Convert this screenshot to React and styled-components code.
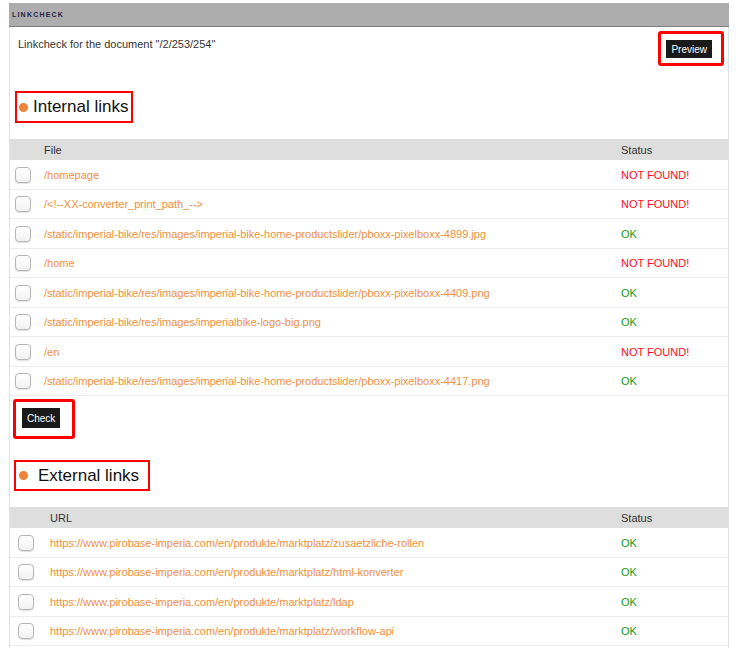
import styled, { createGlobalStyle } from "styled-components";

const internalLinks = [
  { path: "/homepage", ok: false },
  { path: "/<!--XX-converter_print_path_-->", ok: false },
  { path: "/static/imperial-bike/res/images/imperial-bike-home-productslider/pboxx-pixelboxx-4899.jpg", ok: true },
  { path: "/home", ok: false },
  { path: "/static/imperial-bike/res/images/imperial-bike-home-productslider/pboxx-pixelboxx-4409.png", ok: true },
  { path: "/static/imperial-bike/res/images/imperialbike-logo-big.png", ok: true },
  { path: "/en", ok: false },
  { path: "/static/imperial-bike/res/images/imperial-bike-home-productslider/pboxx-pixelboxx-4417.png", ok: true },
];

const externalLinks = [
  { path: "https://www.pirobase-imperia.com/en/produkte/marktplatz/zusaetzliche-rollen", ok: true },
  { path: "https://www.pirobase-imperia.com/en/produkte/marktplatz/html-konverter", ok: true },
  { path: "https://www.pirobase-imperia.com/en/produkte/marktplatz/ldap", ok: true },
  { path: "https://www.pirobase-imperia.com/en/produkte/marktplatz/workflow-api", ok: true },
];

function LinkTable({ label, links, checkCol, checkPad }) {
  return (
    <Table>
      <HeadRow $checkCol={checkCol}>
        <span />
        <span>{label}</span>
        <span>Status</span>
      </HeadRow>
      {links.map((link, i) => (
        <Row key={i} $checkCol={checkCol}>
          <CheckCell $pad={checkPad}>
            <Checkbox />
          </CheckCell>
          <LinkText>{link.path}</LinkText>
          <Status $ok={link.ok}>{link.ok ? "OK" : "NOT FOUND!"}</Status>
        </Row>
      ))}
    </Table>
  );
}

export default function App() {
  return (
    <>
      <GlobalStyle />
      <Page>
        <Panel>
          <TitleBar>
            <TitleText>LINKCHECK</TitleText>
          </TitleBar>
          <Intro>
            <IntroText>Linkcheck for the document "/2/253/254"</IntroText>
            <ButtonMark $pad="6px 9px 5px 5px">
              <DarkButton $h={18}>Preview</DarkButton>
            </ButtonMark>
          </Intro>

          <SectionHead>
            <HeadingMark $pad="0 3px 0 2px" $h={32}>
              <Dot />
              <SectionTitle $gap={5}>Internal links</SectionTitle>
            </HeadingMark>
          </SectionHead>
          <LinkTable label="File" links={internalLinks} checkCol={34} checkPad={5} />

          <CheckWrap>
            <ButtonMark $pad="6px 12px 8px 6px">
              <DarkButton $h={20}>Check</DarkButton>
            </ButtonMark>
          </CheckWrap>

          <SectionHead $top={21} $left={4}>
            <HeadingMark $pad="0 9px 0 3px" $h={31}>
              <Dot />
              <SectionTitle $gap={10}>External links</SectionTitle>
            </HeadingMark>
          </SectionHead>
          <LinkTable label="URL" links={externalLinks} checkCol={40} checkPad={8} />
        </Panel>
      </Page>
    </>
  );
}

const GlobalStyle = createGlobalStyle`
  body {
    margin: 0;
    background: #fff;
    font-family: "Liberation Sans", Arial, sans-serif;
  }
`;

const Page = styled.div`
  padding: 3px 7px 0 9px;
`;

const Panel = styled.div`
  width: 720px;
  border-left: 1px solid #e2e2e2;
  border-right: 1px solid #e2e2e2;
  box-sizing: border-box;
  min-height: 645px;
`;

const TitleBar = styled.div`
  height: 23px;
  background: #adadad;
  border-bottom: 1px solid #7d7d7d;
  display: flex;
  align-items: center;
  padding-left: 3px;
  margin-left: -1px;
  margin-right: -1px;
`;

const TitleText = styled.span`
  font-size: 7px;
  font-weight: bold;
  letter-spacing: 1.2px;
  color: #22244a;
`;

const Intro = styled.div`
  display: flex;
  justify-content: space-between;
  align-items: flex-start;
  padding: 4px 4px 0 8px;
`;

const IntroText = styled.span`
  font-size: 11px;
  color: #333;
  margin-top: 7px;
`;

const ButtonMark = styled.div`
  border: 3px solid #ff0000;
  border-radius: 3px;
  padding: ${(p) => p.$pad};
  display: flex;
`;

const DarkButton = styled.span`
  background: #1a1a1a;
  color: #fff;
  font-size: 10px;
  height: ${(p) => p.$h}px;
  padding: 0 5px;
  display: flex;
  align-items: center;
`;

const SectionHead = styled.div`
  display: flex;
  padding: ${(p) => p.$top ?? 25}px 0 16px ${(p) => p.$left ?? 5}px;
`;

const HeadingMark = styled.div`
  border: 2px solid #ff0000;
  height: ${(p) => p.$h}px;
  box-sizing: border-box;
  padding: ${(p) => p.$pad};
  display: flex;
  align-items: center;
`;

const Dot = styled.span`
  width: 9px;
  height: 9px;
  border-radius: 50%;
  background: #ed823a;
  flex: none;
`;

const SectionTitle = styled.span`
  font-size: 17px;
  color: #111;
  margin-left: ${(p) => p.$gap}px;
`;

const Table = styled.div`
  display: flex;
  flex-direction: column;
`;

const HeadRow = styled.div`
  display: grid;
  grid-template-columns: ${(p) => p.$checkCol}px 1fr 107px;
  height: 21px;
  align-items: center;
  background: #dedede;
  font-size: 11px;
  color: #333;
`;

const Row = styled.div`
  display: grid;
  grid-template-columns: ${(p) => p.$checkCol}px 1fr 107px;
  height: 29.5px;
  align-items: center;
  padding-top: 1px;
  border-bottom: 1px solid #ececec;
  box-sizing: border-box;
  font-size: 11px;
`;

const CheckCell = styled.span`
  display: flex;
  padding-left: ${(p) => p.$pad}px;
`;

const Checkbox = styled.span`
  width: 14px;
  height: 14px;
  border: 1px solid #b5b5b5;
  border-radius: 4px;
  background: linear-gradient(#fff, #f2f2f2);
  box-shadow: 0 1px 1px rgba(0, 0, 0, 0.12);
`;

const LinkText = styled.span`
  color: #f0903c;
  white-space: nowrap;
`;

const Status = styled.span`
  color: ${(p) => (p.$ok ? "#15981a" : "#ff0d1a")};
`;

const CheckWrap = styled.div`
  display: flex;
  padding: 3px 0 0 3px;
`;
